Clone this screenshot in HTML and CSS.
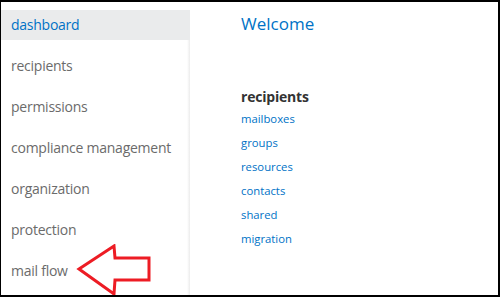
FILE: index.html
```html
<!DOCTYPE html>
<html lang="en">
<head>
    <meta charset="UTF-8">
    <meta name="viewport" content="width=device-width, initial-scale=1.0">
    <title>Exchange admin center</title>
    <link rel="stylesheet" href="styles.css">
</head>
<body>
    <div class="frame">
        <nav class="sidebar">
            <ul class="nav-list">
                <li class="nav-item active">dashboard</li>
                <li class="nav-item">recipients</li>
                <li class="nav-item">permissions</li>
                <li class="nav-item">compliance management</li>
                <li class="nav-item">organization</li>
                <li class="nav-item">protection</li>
                <li class="nav-item">mail flow</li>
            </ul>
        </nav>
        <main class="content">
            <h1 class="welcome">Welcome</h1>
            <section class="group">
                <h2 class="group-title">recipients</h2>
                <ul class="links">
                    <li><a href="#">mailboxes</a></li>
                    <li><a href="#">groups</a></li>
                    <li><a href="#">resources</a></li>
                    <li><a href="#">contacts</a></li>
                    <li><a href="#">shared</a></li>
                    <li><a href="#">migration</a></li>
                </ul>
            </section>
        </main>
        <svg class="callout-arrow" width="80" height="54" viewBox="0 0 80 54">
            <polygon points="4,25 39,2 40,14 74,14 74,36 40,36 39,50" fill="none" stroke="#ed1c24" stroke-width="3" stroke-linejoin="miter"/>
        </svg>
    </div>
</body>
</html>
```

FILE: styles.css
```css
body {
    margin: 0;
    font-family: 'Open Sans', sans-serif;
    background-color: #ffffff;
}
.frame {
    position: relative;
    display: flex;
    width: 500px;
    height: 297px;
    box-sizing: border-box;
    border: 2px solid #000000;
    border-left-width: 1px;
    overflow: hidden;
}
.sidebar {
    width: 189px;
    flex-shrink: 0;
    padding-top: 8px;
}
.nav-list {
    list-style: none;
    margin: 0;
    padding: 0;
    height: 100%;
    background: linear-gradient(to right, #ffffff calc(100% - 3px), #ececec 100%);
}
.nav-item {
    height: 30px;
    line-height: 30px;
    margin-bottom: 11px;
    padding-left: 10px;
    font-size: 14px;
    letter-spacing: -0.25px;
    color: #6b6b6b;
    white-space: nowrap;
}
.nav-item.active {
    background-color: #eaebec;
    color: #0072c6;
}
.content {
    flex: 1;
    padding: 10px 0 0 51px;
}
.welcome {
    margin: 0;
    font-size: 17px;
    font-weight: normal;
    line-height: 24px;
    color: #0072c6;
}
.group {
    margin-top: 51px;
}
.group-title {
    margin: 0;
    font-size: 14px;
    font-weight: bold;
    letter-spacing: -0.2px;
    line-height: 20px;
    color: #333333;
}
.links {
    list-style: none;
    margin: 0;
    padding: 0;
}
.links li {
    line-height: 24px;
    font-size: 11.3px;
}
.links a {
    color: #0072c6;
    text-decoration: none;
}
.callout-arrow {
    position: absolute;
    left: 74px;
    top: 242px;
}
```
